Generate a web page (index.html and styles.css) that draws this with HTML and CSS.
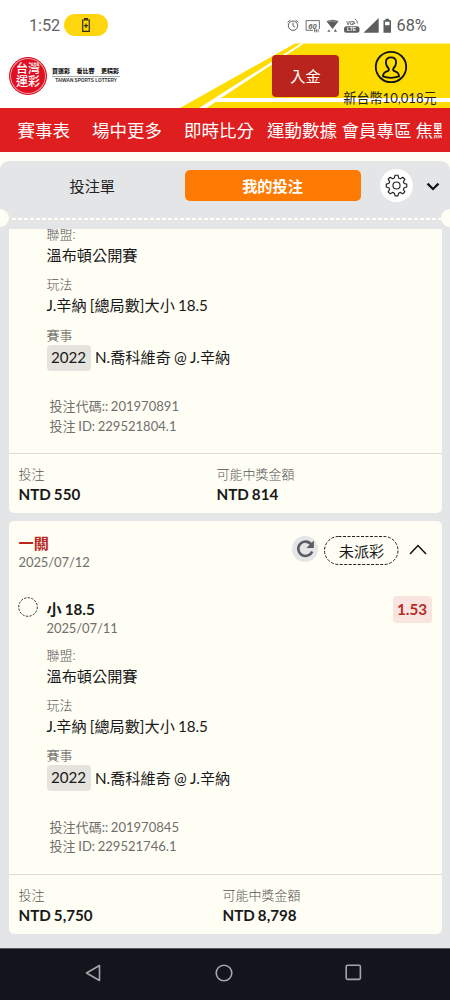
FILE: index.html
```html
<!DOCTYPE html>
<html lang="zh-Hant">
<head>
<meta charset="utf-8">
<title>台灣運彩</title>
<link rel="stylesheet" href="styles.css">
</head>
<body>
<div class="phone">
  <div class="status">
    <span class="clock">1:52</span>
    <span class="pill"><svg width="8" height="14" viewBox="0 0 8 14" fill="none" stroke="#333000" stroke-width="1.2"><path d="M2.6 2V.7h2.8V2M.7 2h6.6v11.3H.7zM4 5.5v4.4M1.900 7.700h4.200"/></svg></span>
    <svg class="indicators" width="104" height="17" viewBox="0 0 104 17">
      <g fill="none" stroke="#5d5d5d">
        <circle cx="6" cy="8.700" r="4.700"/><path d="M6 5.800v3.100l2 1.200M.6 5.400l2.700-2.300M11.400 5.400L8.700 3.100"/>
        <path stroke-width=".9" d="M26 13.300h-6.900V3.600h13.300V12"/>
        <path stroke-width=".8" d="M27.600 12v3.300m0-1.600h2m0-1.700v3.300m1.600-3.100v3.100"/>
        <path stroke-width=".9" d="M66.300 4.100q1.600 1 1.500 3M67.800 1.800q2.700 1.500 2.700 4.600M65 6.200q.8.4.8 1.300"/>
      </g>
      <g fill="#5d5d5d">
        <path d="M39.500 4.200q6-3.100 12 0L45.500 12zM40.200 14.800l2-2.400 1 2.400zM47 14.800l1.100-2.700 2 2.700z"/>
        <path fill="#999" d="M41.200 4.300q4.300-1.800 8.600 0l-.7.700q-3.600-1.200-7.200 0z"/>
        <rect x="57" y="9.300" width="15.500" height="6.500" rx="2.500"/>
        <path d="M76.500 15.700L91.700 1v14.700z"/>
        <path fill-rule="evenodd" d="M96.500 3.200h2V1.800h3.600v1.400h2v12.600h-7.600zM98 4.800h4.500v3.400H98z"/>
      </g>
      <text class="tiny sixty" x="21.300" y="11.500">60</text>
      <text class="tiny vo" x="59.200" y="7.800">VO</text>
      <text class="tiny lte" x="60" y="14.400">LTE</text>
    </svg>
    <span class="percent">68%</span>
  </div>

  <header class="header">
    <svg class="stripes" width="270" height="65" viewBox="180 43 270 65">
      <path fill="#ffdc00" d="M295 43.500H450V108H180z"/>
      <path fill="#fff" d="M304 43.500h-3.200L225 91.500 199 108h7.500l9-6H450v-4H221l4.500-3z"/>
    </svg>
    <div class="brand">
      <div class="seal"><span>台灣</span><span>運彩</span></div>
      <div class="slogan">
        <div class="slogan-zh"><span>買運彩</span><span>看比賽</span><span>更精彩</span></div>
        <div class="slogan-en">TAIWAN SPORTS LOTTERY</div>
      </div>
    </div>
    <button class="deposit">入金</button>
    <div class="account">
      <svg width="34" height="34" viewBox="0 0 34 34" fill="none" stroke="#111" stroke-width="1.800">
        <circle cx="17" cy="17" r="15.200"/>
        <path d="M14.700 18.500C12.700 16.800 11.900 14.700 11.900 12.300C11.900 9.200 14 7.400 17 7.400s5.100 1.800 5.100 4.900c0 2.400-.8 4.500-2.800 6.200c-.7 1.800.1 2.300 1.900 2.900c2.800 1 3.800 2 3.800 5c-4.500 1.600-11.500 1.600-16 0c0-3 1-4 3.800-5c1.800-.6 2.600-1.100 1.900-2.900z"/>
      </svg>
      <span class="balance">新台幣10,018元</span>
    </div>
  </header>

  <nav class="nav">
    <div class="nav-items">
      <span class="n1">賽事表</span><span class="n2">場中更多</span><span class="n3">即時比分</span><span class="n4">運動數據</span><span class="n5">會員專區</span><span>焦點</span>
    </div>
  </nav>

  <main class="panel">
    <div class="tabs">
      <div class="tab">投注單</div>
      <div class="tab active">我的投注</div>
      <div class="gear">
        <svg width="23" height="23" viewBox="0 0 24 24" fill="none" stroke="#222" stroke-width="1.200" stroke-linejoin="round">
          <circle cx="12" cy="12" r="3.700"/>
          <path d="M10.500 1.300h3l.7 2.800 1.900.8 2.500-1.500 2.100 2.100-1.500 2.500.8 1.900 2.700.7v2.900l-2.700.8-.8 1.900 1.500 2.400-2.100 2.100-2.500-1.500-1.900.8-.7 2.800h-3L9.800 20l-1.900-.8-2.500 1.500-2.100-2.100 1.500-2.400-.8-1.900-2.700-.8v-2.900L4 9.900 4.800 8 3.300 5.500l2.100-2.100 2.500 1.500 1.900-.8z"/>
        </svg>
      </div>
      <svg class="collapse" width="14" height="9" viewBox="0 0 14 9" fill="none" stroke="#111" stroke-width="2.200"><path d="M1.500 1.600L7 7l5.500-5.400"/></svg>
    </div>
    <div class="perforation"><i class="notch"></i><i class="dots"></i><i class="notch"></i></div>

    <div class="bets">
      <section class="card scrolled">
        <div class="details">
          <div class="label">聯盟:</div>
          <div class="value">溫布頓公開賽</div>
          <div class="label">玩法</div>
          <div class="value">J.辛納 [總局數]大小 18.5</div>
          <div class="label">賽事</div>
          <div class="match"><span class="chip">2022</span><span>N.喬科維奇 @ J.辛納</span></div>
          <div class="codes"><div>投注代碼:: 201970891</div><div>投注 ID: 229521804.1</div></div>
        </div>
        <div class="totals">
          <div class="stake"><div class="label">投注</div><div class="amount">NTD 550</div></div>
          <div><div class="label">可能中獎金額</div><div class="amount">NTD 814</div></div>
        </div>
      </section>

      <section class="card">
        <div class="card-head">
          <div class="card-title"><div class="kind">一關</div><div class="date">2025/07/12</div></div>
          <div class="refresh">
            <svg width="20" height="20" viewBox="0 0 20 20"><path d="M16.300 5.500A7.200 7.200 0 1 0 17.200 12.400" fill="none" stroke="#5b5d62" stroke-width="2.600"/><path d="M18.900 1.400v7.500h-7.500z" fill="#5b5d62"/></svg>
          </div>
          <div class="state">
            <svg class="outline" width="75" height="29" viewBox="0 0 75 29" fill="none" stroke="#222" stroke-dasharray="3 1.500"><rect x=".5" y=".5" width="73.500" height="28" rx="14"/></svg>
            <span>未派彩</span>
          </div>
          <svg class="fold" width="18" height="11" viewBox="0 0 18 11" fill="none" stroke="#111" stroke-width="1.500"><path d="M1 10L9 1.500l8 8.500"/></svg>
        </div>
        <div class="pick">
          <svg class="ring" width="20" height="20" viewBox="0 0 20 20" fill="none" stroke="#333" stroke-dasharray="2.300 1.300"><circle cx="10" cy="10" r="9.300"/></svg>
          <div class="pick-text"><div class="pick-name">小 18.5</div><div class="date">2025/07/11</div></div>
          <div class="odds">1.53</div>
        </div>
        <div class="details">
          <div class="label">聯盟:</div>
          <div class="value">溫布頓公開賽</div>
          <div class="label">玩法</div>
          <div class="value">J.辛納 [總局數]大小 18.5</div>
          <div class="label">賽事</div>
          <div class="match"><span class="chip">2022</span><span>N.喬科維奇 @ J.辛納</span></div>
          <div class="codes"><div>投注代碼:: 201970845</div><div>投注 ID: 229521746.1</div></div>
        </div>
        <div class="totals">
          <div class="stake wide"><div class="label">投注</div><div class="amount">NTD 5,750</div></div>
          <div><div class="label">可能中獎金額</div><div class="amount">NTD 8,798</div></div>
        </div>
      </section>
    </div>
  </main>

  <footer class="system">
    <svg width="16" height="18" viewBox="0 0 16 18"><path d="M14.500 1.500v15L1.500 9z"/></svg>
    <svg class="home" width="18" height="18" viewBox="0 0 18 18"><circle cx="9" cy="9" r="7.800"/></svg>
    <svg width="17" height="17" viewBox="0 0 17 17"><rect x="1.200" y="1.200" width="14.200" height="14.200" rx="1.300"/></svg>
  </footer>
</div>
</body>
</html>
```

FILE: styles.css
```css
* { box-sizing: border-box; }
body { margin: 0; }
.phone {
  width: 450px; height: 1000px; overflow: hidden;
  display: flex; flex-direction: column;
  background: #fffef5; color: #191919;
  font-family: Lato, "Noto Sans CJK TC", sans-serif;
}
svg { display: block; flex: none; }

.status { height: 43px; flex: none; background: #fff; display: flex; align-items: center; padding: 7px 0 0 29px; font-family: Roboto, sans-serif; color: #626262; }
.clock { width: 35px; font-size: 16.300px; letter-spacing: -.1px; }
.pill { width: 44px; height: 22px; border-radius: 11px; background: #ffd60d; display: flex; align-items: center; justify-content: center; }
.indicators { margin-left: 179px; }
.tiny { font-family: "Liberation Sans", sans-serif; fill: #5d5d5d; font-weight: bold; }
.sixty { font-size: 7.500px; font-style: italic; }
.vo { font-size: 5.500px; }
.lte { font-size: 5px; fill: #fff; }
.percent { margin-left: 5.500px; font-size: 16.300px; color: #5d5d5d; }

.header { height: 65px; flex: none; position: relative; background: #fff; display: flex; align-items: flex-start; }
.stripes { position: absolute; right: 0; top: 0; }
.brand { display: flex; padding: 14px 0 0 9px; width: 271px; position: relative; }
.seal { width: 38px; height: 38px; border-radius: 50%; background: #df1022; border: 1px solid #df1022; box-shadow: inset 0 0 0 1px #f5a9ae; color: #fff; display: flex; flex-direction: column; align-items: center; justify-content: center; font-size: 12px; line-height: 12.500px; font-weight: 500; padding-bottom: 1px; }
.slogan { margin: 9px 0 0 5px; width: 68px; }
.slogan-zh { display: flex; justify-content: space-between; padding: 0 1px 0 0; font-size: 6px; line-height: 9px; font-weight: 900; border-bottom: 1px solid #aaa; height: 11px; color: #222; }
.slogan-en { font: bold 4.700px/8px "Liberation Sans", sans-serif; text-align: center; white-space: nowrap; color: #333; }
.deposit { position: relative; margin: 12px 0 0 1px; width: 67px; height: 42px; border: 0; border-radius: 4px; background: #b9251c; color: #fff; font: 15.200px/42px Lato, "Noto Sans CJK TC", sans-serif; padding: 0; }
.account { position: relative; width: 104px; padding-top: 7px; display: flex; flex-direction: column; align-items: center; }
.balance { font-size: 13.100px; line-height: 18px; margin: 5px 2px 0 0; white-space: nowrap; color: #222; }

.nav { height: 44px; flex: none; background: #df1e20; padding: 0 8px 0 17.500px; color: #fff; }
.nav-items { overflow: hidden; display: flex; white-space: nowrap; font-size: 17.500px; line-height: 45px; }
.nav-items span { flex: none; }
.n1 { width: 74.500px; } .n2 { width: 92px; } .n3 { width: 83px; } .n4 { width: 74.500px; } .n5 { width: 74px; }

.panel { margin-top: 9px; height: 787px; flex: none; background: #e4e5e7; border-radius: 9px 9px 0 0; }
.tabs { height: 48px; display: flex; align-items: center; }
.tab { width: 184.500px; text-align: center; font-size: 15.200px; line-height: 32px; color: #222; margin-top: 1px; }
.tab.active { width: 176px; height: 31px; border-radius: 5px; background: #ff7a00; color: #fff; font-weight: 600; }
.gear { width: 33px; height: 33px; border-radius: 50%; background: #fff; margin-left: 19px; display: flex; align-items: center; justify-content: center; }
.collapse { margin: 2px 0 0 13.500px; }
.perforation { height: 18px; display: flex; align-items: center; justify-content: space-between; overflow: hidden; }
.notch { width: 18px; height: 18px; border-radius: 50%; background: #fffef5; margin-left: -9px; flex: none; }
.notch:last-child { margin: 0 -9px 0 0; }
.dots { flex: 1; margin: 2px 0 0 3px; height: 2px; background: repeating-linear-gradient(90deg, #fffef5 0 4px, transparent 4px 6px); }

.bets { margin: 2px 8.500px 0; display: flex; flex-direction: column; gap: 8px; }
.card { background: #fffef5; border-radius: 5px; overflow: hidden; height: 413px; flex: none; word-spacing: -.7px; }
.card.scrolled { height: 284px; border-radius: 0 0 5px 5px; }
.scrolled .details { margin-top: -5px; }
.details { padding-left: 38px; height: 229px; }
.label { font-size: 13px; line-height: 20px; font-weight: 300; color: #555451; }
.value { font-size: 15.200px; line-height: 23.300px; margin-bottom: 7.200px; letter-spacing: -.03px; }
.match { display: flex; align-items: center; gap: 4.500px; height: 26px; font-size: 15.200px; line-height: 25.500px; }
.chip { width: 44px; height: 26px; border-radius: 4px; background: #e5e3de; text-align: center; }
.codes { padding: 26.500px 0 0 3px; font-size: 13.050px; line-height: 19.300px; color: #706f6c; }
.totals { border-top: 1px solid #dcdcd8; padding: 9.500px 10px 0; display: flex; height: 60px; }
.stake { width: 198px; }
.stake.wide { width: 204px; }
.amount { font-size: 15.200px; line-height: 21px; font-weight: 700; }

.card-head { height: 65px; display: flex; padding-left: 10px; align-items: flex-start; }
.card-title { width: 273.500px; padding-top: 12px; }
.kind { color: #b8271e; font-size: 15.200px; line-height: 20px; font-weight: 700; }
.date { font-size: 13px; line-height: 18px; color: #706f6c; letter-spacing: -.1px; }
.refresh { width: 26px; height: 26px; margin-top: 15px; border-radius: 50%; background: #e4e5e7; display: flex; align-items: center; justify-content: center; }
.state { position: relative; margin: 14.500px 0 0 6px; width: 75px; height: 29px; text-align: center; font-size: 15.200px; line-height: 30px; }
.outline { position: absolute; left: 0; top: 0; }
.fold { margin: 23px 0 0 10px; }
.pick { height: 58.500px; display: flex; padding-left: 9px; }
.ring { margin-top: 11px; }
.pick-text { margin-left: 9px; width: 346px; padding-top: 13px; }
.pick-name { font-size: 15.200px; line-height: 20px; font-weight: 700; }
.odds { width: 39px; height: 27px; margin-top: 10px; border-radius: 4px; background: #f8e5df; color: #b52c25; font-size: 15.200px; line-height: 27px; font-weight: 700; text-align: center; }
.pick + .details { height: 229.500px; }

.system { height: 52px; background: #12151c; border-top: 1px solid #5b5d60; display: flex; align-items: center; justify-content: space-between; padding: 0 88px 4px 85px; }
.system svg { fill: none; stroke: #a5a6a9; stroke-width: 1.600; stroke-linejoin: round; }
.system .home { margin-left: 2px; }
```
